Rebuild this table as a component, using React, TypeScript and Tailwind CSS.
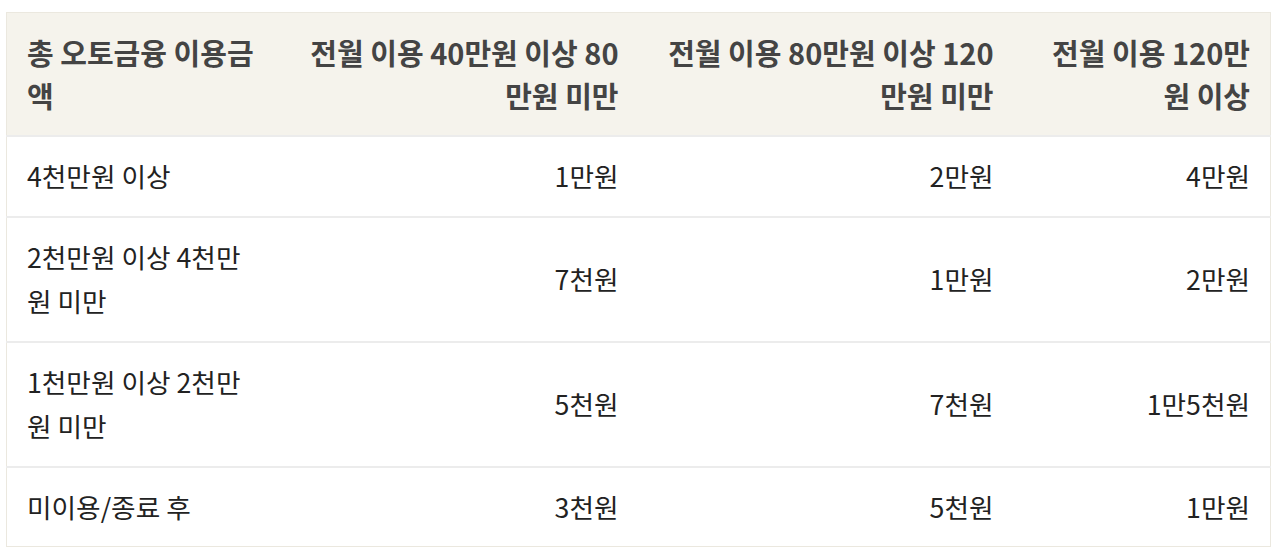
const header = ['총 오토금융 이용금액', '전월 이용 40만원 이상 80만원 미만', '전월 이용 80만원 이상 120만원 미만', '전월 이용 120만원 이상'];

const rows = [
  ['4천만원 이상', '1만원', '2만원', '4만원'],
  ['2천만원 이상 4천만원 미만', '7천원', '1만원', '2만원'],
  ['1천만원 이상 2천만원 미만', '5천원', '7천원', '1만5천원'],
  ['미이용/종료 후', '3천원', '5천원', '1만원'],
];

export default function App() {
  return (
    <div className="w-[1280px] h-[558px] bg-white pt-3 px-[6px] font-['Noto_Sans_CJK_KR','Noto_Sans',sans-serif]">
      <table className="w-[1264px] table-fixed border-collapse border border-[#ebe8df]">
        <colgroup>
          <col className="w-[268px]" />
          <col className="w-[364px]" />
          <col className="w-[375px]" />
          <col className="w-[257px]" />
        </colgroup>
        <thead>
          <tr className="bg-[#f5f3ec]">
            {header.map((h, i) => (
              <th
                key={h}
                className={`px-5 py-[18px] align-middle text-[29px] leading-[43px] font-bold text-[#444] ${i === 0 ? 'text-left' : 'text-right'}`}
              >
                {h}
              </th>
            ))}
          </tr>
        </thead>
        <tbody>
          {rows.map((r) => (
            <tr key={r[0]} className="border-t-2 border-[#ececec]">
              {r.map((c, i) => (
                <td
                  key={i}
                  className={`px-5 py-[17px] align-middle text-[26.7px] leading-[44.5px] text-[#222] ${i === 0 ? 'text-left' : 'text-right'}`}
                >
                  {c}
                </td>
              ))}
            </tr>
          ))}
        </tbody>
      </table>
    </div>
  );
}
